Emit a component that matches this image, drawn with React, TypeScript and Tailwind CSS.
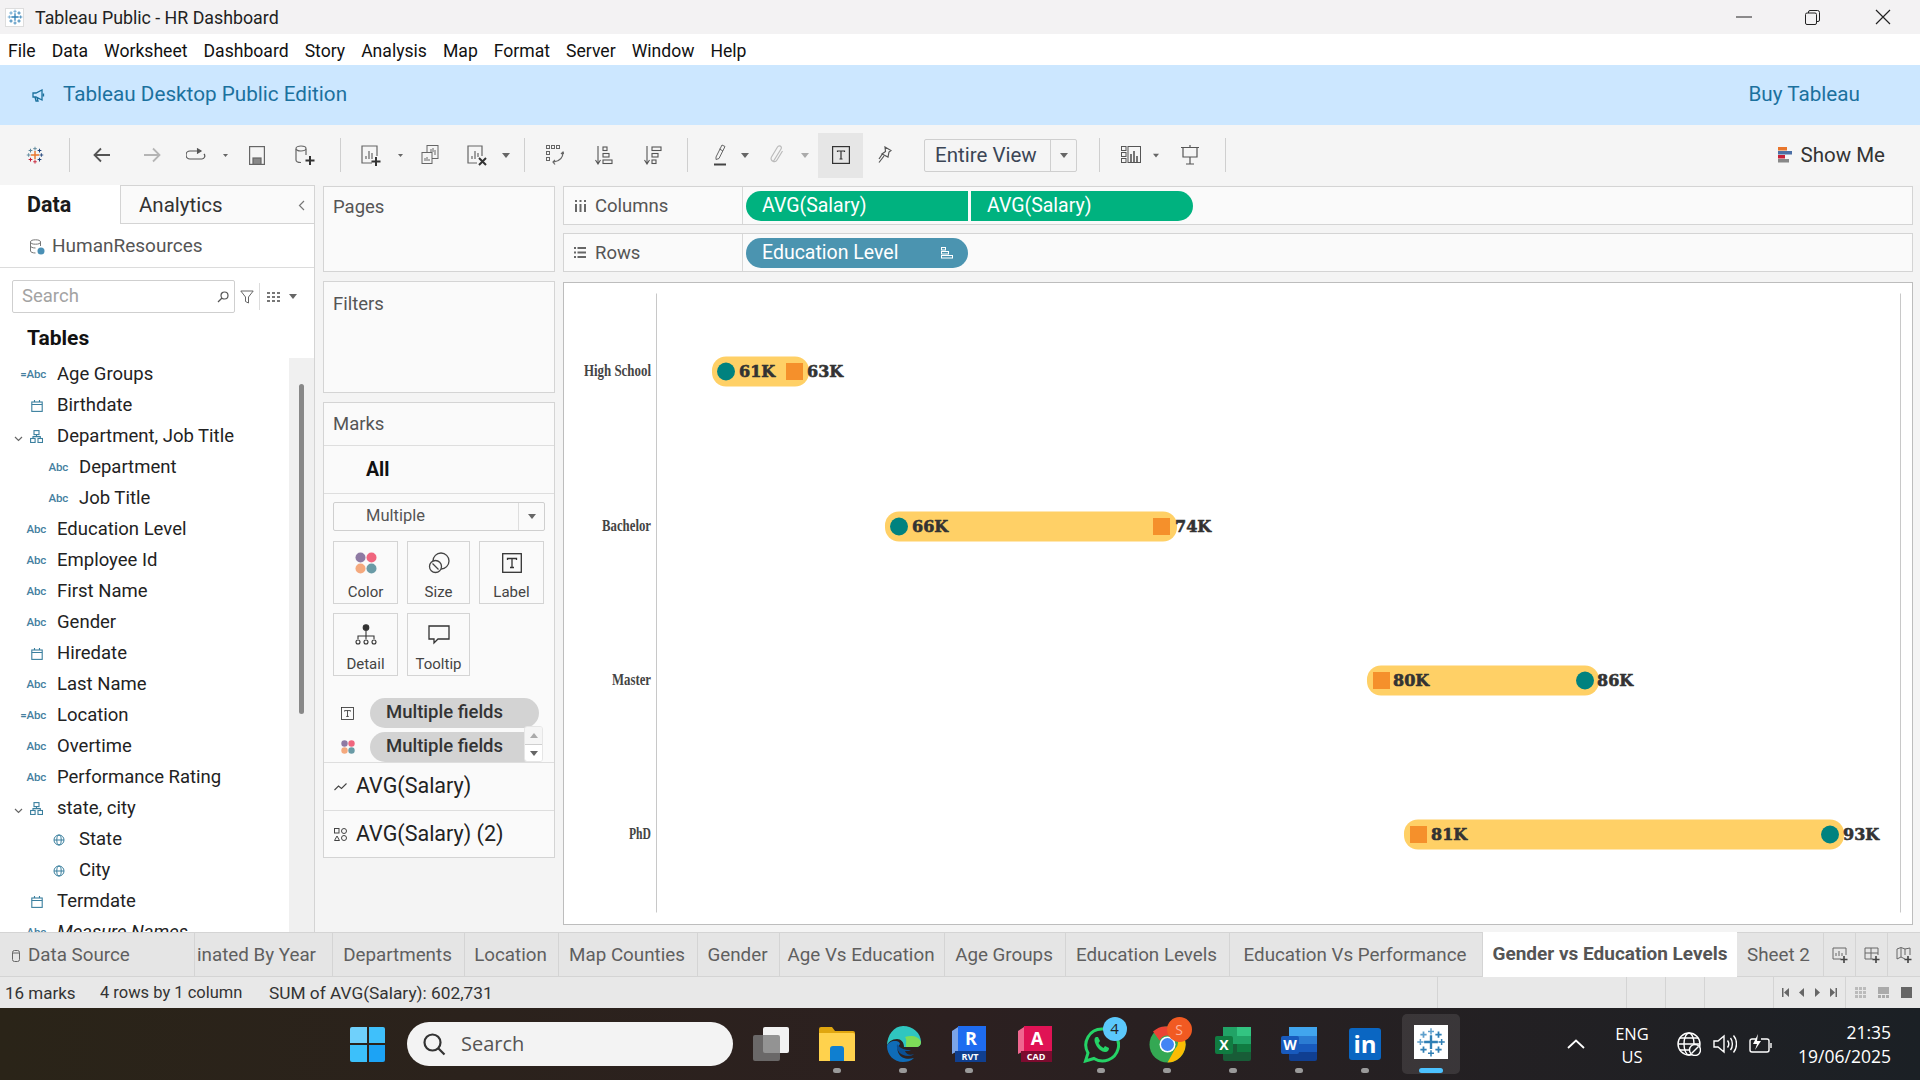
import React from 'react';

const ui = "font-['Roboto',sans-serif]";
const win = "font-['Open_Sans',sans-serif]";

// tableau cross mark, colours are passed in so the same drawing works for the tile and the toolbar
const TableauMark: React.FC<{ size: number; a: string; b: string; c: string; d: string }> = ({ size, a, b, c, d }) => (
    <svg width={size} height={size} viewBox="0 0 24 24" fill="none" strokeLinecap="butt">
        <path d="M12 6.5v11M6.5 12h11" stroke={a} strokeWidth="1.9" />
        <path d="M12 1v5M9.6 3.5h4.8" stroke={b} strokeWidth="1.2" />
        <path d="M12 18.5v5M9.6 21h4.8" stroke={c} strokeWidth="1.2" />
        <path d="M3.5 9.6v4.8M1 12h5" stroke={b} strokeWidth="1.2" />
        <path d="M20.5 9.6v4.8M18 12h5" stroke={d} strokeWidth="1.2" />
        <path d="M6 3.5v5M3.5 6h5" stroke={b} strokeWidth="1.4" />
        <path d="M18 3.5v5M15.5 6h5" stroke={d} strokeWidth="1.4" />
        <path d="M6 15.5v5M3.5 18h5" stroke={c} strokeWidth="1.4" />
        <path d="M18 15.5v5M15.5 18h5" stroke={d} strokeWidth="1.4" />
    </svg>
);

const Caret = () => <svg width="8" height="5" viewBox="0 0 8 5" className="text-[#666]"><path d="M0 0h8L4 5z" fill="currentColor" /></svg>;
const Divider = () => <div className="h-[34px] w-px bg-[#cfcfcf] shrink-0" />;

const Tool: React.FC<{ c: string; children?: React.ReactNode }> = ({ c, children }) => (
    <div className={`flex items-center justify-center shrink-0 ${c}`}>{children}</div>
);

const Toolbar = () => (
    <div className="h-[60px] bg-[#f5f5f5] flex items-center shrink-0">
        <Tool c="w-[69px]"><TableauMark size={18} a="#e8762c" b="#5b879b" c="#c72037" d="#1f447b" /></Tool>
        <Divider />
        <Tool c="w-[64px]">
            <svg width="18" height="16" viewBox="0 0 18 16" fill="none" stroke="#555" strokeWidth="1.8"><path d="M17 8H2M8 1.5 1.5 8 8 14.5" /></svg>
        </Tool>
        <Tool c="w-[35px]">
            <svg width="18" height="16" viewBox="0 0 18 16" fill="none" stroke="#b5b5b5" strokeWidth="1.8"><path d="M1 8h15M10 1.5 16.5 8 10 14.5" /></svg>
        </Tool>
        <Tool c="w-[54px]">
            <svg width="20" height="14" viewBox="0 0 20 14" fill="none" stroke="#555" strokeWidth="1.2"><path d="M12 3H4a3.5 3.5 0 0 0 0 8h12a3 3 0 0 0 2-5" /><path d="m11 .5 4 2.5-4 2.5" fill="#555" /></svg>
        </Tool>
        <Tool c="w-[5px]"><Caret /></Tool>
        <Tool c="w-[58px]">
            <svg width="16" height="19" viewBox="0 0 16 19" fill="none" stroke="#666" strokeWidth="1.2"><rect x=".6" y=".6" width="14.8" height="17.8" /><rect x="4" y="12" width="8" height="6.4" fill="#888" /></svg>
        </Tool>
        <Tool c="w-[38px]">
            <svg width="20" height="21" viewBox="0 0 20 21" fill="none" stroke="#666" strokeWidth="1.2"><path d="M1 4v11c0 1.5 2 2.5 5 2.5M11 10V4" /><ellipse cx="6" cy="3.5" rx="5" ry="2.5" /><path d="M15 11v9M10.5 15.5h9" stroke="#333" strokeWidth="2" /></svg>
        </Tool>
        <div className="w-4 shrink-0" />
        <Divider />
        <Tool c="w-[54px] ml-[3px]">
            <svg width="20" height="21" viewBox="0 0 20 21" fill="none" stroke="#666" strokeWidth="1.2"><path d="M11 18H1V1h15v10" /><path d="M5 14v-3M8 14V6M11 14V8" /><path d="M15 12v9M10.5 16.5h9" stroke="#333" strokeWidth="2" /></svg>
        </Tool>
        <Tool c="w-[5px]"><Caret /></Tool>
        <Tool c="w-[54px]">
            <svg width="18" height="20" viewBox="0 0 18 20" fill="none" stroke="#666" strokeWidth="1"><rect x="6" y=".5" width="11" height="13" /><rect x="1" y="7.5" width="10" height="11" fill="#f5f5f5" /><path d="M4 16v-3M6 16v-4M8 16v-2M10 7V4M12 7V3M14 10V5" /></svg>
        </Tool>
        <Tool c="w-[40px]">
            <svg width="20" height="21" viewBox="0 0 20 21" fill="none" stroke="#666" strokeWidth="1.2"><path d="M10 18H1V1h14v10" /><path d="M5 14v-3M8 14V6M11 12V8" /><path d="m12 13 7 7M19 13l-7 7" stroke="#333" strokeWidth="2" /></svg>
        </Tool>
        <Tool c="w-[18px]"><Caret /></Tool>
        <div className="w-[9px] shrink-0" />
        <Divider />
        <Tool c="w-[60px]">
            <svg width="18" height="20" viewBox="0 0 18 20" fill="none" stroke="#666" strokeWidth="1"><rect x=".5" y=".5" width="3" height="3" /><rect x="5.5" y=".5" width="3" height="3" /><rect x="10.5" y=".5" width="3" height="3" /><rect x=".5" y="6.5" width="3" height="3" /><rect x=".5" y="12.5" width="3" height="3" /><path d="M17 7c0 5-3 9-9 10M9 15l-2 2 2 2.5M15 9l2-2 1 2" strokeWidth="1.2" /></svg>
        </Tool>
        <Tool c="w-[38px]">
            <svg width="18" height="19" viewBox="0 0 18 19" fill="none" stroke="#555" strokeWidth="1.1"><path d="M3 0v17M.5 14 3 18l2.5-4" /><rect x="8" y="1" width="4" height="3.5" /><rect x="8" y="7.5" width="6" height="3.5" /><rect x="8" y="14" width="9" height="3.5" /></svg>
        </Tool>
        <Tool c="w-[60px]">
            <svg width="18" height="19" viewBox="0 0 18 19" fill="none" stroke="#555" strokeWidth="1.1"><path d="M3 0v17M.5 14 3 18l2.5-4" /><rect x="8" y="1" width="9" height="3.5" /><rect x="8" y="7.5" width="6" height="3.5" /><rect x="8" y="14" width="4" height="3.5" /></svg>
        </Tool>
        <div className="w-1 shrink-0" />
        <Divider />
        <Tool c="w-[34px] ml-[15px]">
            <svg width="14" height="22" viewBox="0 0 14 22" fill="none" stroke="#666" strokeWidth="1"><path d="m3 13 6-12 3 1.5-6 12-3 1zM6.500 5 10 7" /><path d="M1 20.5h12" stroke="#444" strokeWidth="2" /></svg>
        </Tool>
        <Tool c="w-[16px]"><Caret /></Tool>
        <Tool c="w-[48px]">
            <svg width="14" height="20" viewBox="0 0 14 20" fill="none" stroke="#bbb" strokeWidth="1.2"><path d="M3 17 11 4c1.500-2.500-2-4.500-3.500-2L1.500 12c-2 3.500 3.500 6.500 5.500 3l5.500-9" /></svg>
        </Tool>
        <Tool c="w-[8px]"><svg width="8" height="5" viewBox="0 0 8 5"><path d="M0 0h8L4 5z" fill="#aaa" /></svg></Tool>
        <div className="w-[9px] shrink-0" />
        <div className="w-[45px] h-[45px] bg-[#e6e6e6] flex items-center justify-center shrink-0">
            <svg width="18" height="18" viewBox="0 0 18 18" fill="none" stroke="#333" strokeWidth="1.2"><rect x=".6" y=".6" width="16.8" height="16.8" /><path d="M5.500 6V5h7v1M9 5v8M7.500 13h3" /></svg>
        </div>
        <Tool c="w-[44px]">
            <svg width="14" height="18" viewBox="0 0 14 18" fill="none" stroke="#555" strokeWidth="1.2"><path d="m7 1 6 3.500-2 1.500-1 5-6-3 3.500-2.500zM4 8.500 1 13M6 10l-5 6.500" /></svg>
        </Tool>
        <div className="w-[17px] shrink-0" />
        <div className="w-[153px] h-[33px] border border-[#cfcfcf] rounded-[2px] flex items-center shrink-0">
            <span className={`flex-1 pl-[10px] text-[20.5px] text-[#3c4656] ${ui}`}>Entire View</span>
            <div className="w-[26px] h-full border-l border-[#cfcfcf] flex items-center justify-center"><Caret /></div>
        </div>
        <div className="w-[22px] shrink-0" />
        <Divider />
        <Tool c="w-[44px] ml-[9px]">
            <svg width="20" height="18" viewBox="0 0 20 18" fill="none" stroke="#555" strokeWidth="1"><rect x=".5" y=".5" width="4.500" height="4" /><rect x=".5" y="6.500" width="4.500" height="4" /><rect x=".5" y="12.500" width="4.500" height="4" /><rect x="7" y=".5" width="12.500" height="16" /><path d="M10 16V8M13 16V5M16 16v-6" strokeWidth="1.6" /></svg>
        </Tool>
        <Tool c="w-[6px]"><Caret /></Tool>
        <Tool c="w-[62px]">
            <svg width="18" height="20" viewBox="0 0 18 20" fill="none" stroke="#555" strokeWidth="1.2"><path d="M0 2.500h18M2 3v9h14V3M9 0v2M9 12v7M5 19h8" /></svg>
        </Tool>
        <div className="w-1 shrink-0" />
        <Divider />
        <div className="ml-auto pr-[35px] flex items-center gap-[9px]">
            <svg width="14" height="16" viewBox="0 0 14 16"><rect width="9" height="3.5" fill="#e8762c" /><rect y="4" width="14" height="3.5" fill="#4b6fa5" /><rect y="8" width="7" height="3.5" fill="#c72037" /><rect y="12" width="11" height="3.5" fill="#888" /></svg>
            <span className={`text-[20.5px] text-[#333] ${ui}`}>Show Me</span>
        </div>
    </div>
);

const Abc: React.FC<{ eq?: boolean }> = ({ eq }) => (
    <span className="text-[11.5px] font-medium text-[#44809f] tracking-[-0.2px]">{eq ? '=' : ''}Abc</span>
);
const Cal = () => (
    <svg width="12" height="12" viewBox="0 0 12 12" fill="none" stroke="#3a7f9e" strokeWidth="1.1"><rect x=".8" y="2" width="10.4" height="9.4" /><path d="M.8 4.500h10.400M3.500 0v2M8.500 0v2" /></svg>
);
const Hier = () => (
    <svg width="13" height="13" viewBox="0 0 13 13" fill="none" stroke="#3a7f9e" strokeWidth="1.1"><rect x="4" y=".6" width="5" height="4" /><rect x=".6" y="8.5" width="4.5" height="4" /><rect x="8" y="8.5" width="4.5" height="4" /><path d="M6.500 4.600v2H3v2M6.500 6.600H10.300v2" /></svg>
);
const Globe = () => (
    <svg width="12" height="12" viewBox="0 0 12 12" fill="none" stroke="#3a7f9e" strokeWidth="1"><circle cx="6" cy="6" r="5" /><ellipse cx="6" cy="6" rx="2.2" ry="5" /><path d="M1 6h10" /></svg>
);

type Field = { name: string; kind: 'abc' | 'eq' | 'cal' | 'hier' | 'geo'; child?: boolean; open?: boolean; italic?: boolean };
const fields: Field[] = [
    { name: 'Age Groups', kind: 'eq' },
    { name: 'Birthdate', kind: 'cal' },
    { name: 'Department, Job Title', kind: 'hier', open: true },
    { name: 'Department', kind: 'abc', child: true },
    { name: 'Job Title', kind: 'abc', child: true },
    { name: 'Education Level', kind: 'abc' },
    { name: 'Employee Id', kind: 'abc' },
    { name: 'First Name', kind: 'abc' },
    { name: 'Gender', kind: 'abc' },
    { name: 'Hiredate', kind: 'cal' },
    { name: 'Last Name', kind: 'abc' },
    { name: 'Location', kind: 'eq' },
    { name: 'Overtime', kind: 'abc' },
    { name: 'Performance Rating', kind: 'abc' },
    { name: 'state, city', kind: 'hier', open: true },
    { name: 'State', kind: 'geo', child: true },
    { name: 'City', kind: 'geo', child: true },
    { name: 'Termdate', kind: 'cal' },
    { name: 'Measure Names', kind: 'abc', italic: true },
];

const FieldRow: React.FC<{ f: Field }> = ({ f }) => (
    <div className="h-[31px] flex items-center shrink-0">
        <div className={`relative flex items-center justify-end shrink-0 ${f.child ? 'w-[68px]' : 'w-[46px]'}`}>
            {f.open && (
                <svg width="9" height="6" viewBox="0 0 9 6" fill="none" stroke="#666" strokeWidth="1.2" className="absolute left-[14px] top-[6px]"><path d="m1 1 3.500 3.500L8 1" /></svg>
            )}
            {f.kind === 'abc' && <Abc />}
            {f.kind === 'eq' && <Abc eq />}
            {f.kind === 'cal' && <div className="pr-[3px] flex"><Cal /></div>}
            {f.kind === 'hier' && <div className="pr-[3px] flex"><Hier /></div>}
            {f.kind === 'geo' && <div className="pr-[3px] flex"><Globe /></div>}
        </div>
        <span className={`ml-[11px] text-[18.5px] text-[#222] whitespace-nowrap ${f.italic ? 'italic' : ''}`}>{f.name}</span>
    </div>
);

const DataPanel = () => (
    <div className="w-[315px] bg-white border-r border-[#d4d4d4] flex flex-col shrink-0 overflow-hidden">
        <div className="h-[39px] flex shrink-0">
            <div className="w-[120px] pl-[27px] pt-px flex items-center text-[21.5px] font-bold text-[#1a1a1a]">Data</div>
            <div className="flex-1 bg-[#fafafa] border-l border-b border-t border-[#d4d4d4] pl-[18px] pt-px flex items-center justify-between pr-[9px] text-[20.5px] text-[#333]">
                <span>Analytics</span>
                <svg width="7" height="11" viewBox="0 0 7 11" fill="none" stroke="#777" strokeWidth="1.2"><path d="M6 1 1.500 5.500 6 10" /></svg>
            </div>
        </div>
        <div className="h-[44px] border-b border-[#dcdcdc] pt-[2px] flex items-center pl-[29px] gap-[7px] shrink-0">
            <svg width="16" height="16" viewBox="0 0 16 16" fill="none" stroke="#777" strokeWidth="1"><ellipse cx="6.500" cy="3" rx="5" ry="2.200" /><path d="M1.500 3v9c0 1 2 2 5 2M11.500 3v4M1.500 7c0 1 2 2 5 2" /><circle cx="12" cy="12" r="3.500" fill="#4a90b5" stroke="none" /></svg>
            <span className="text-[19px] text-[#555]">HumanResources</span>
        </div>
        <div className="h-[33px] mt-[12px] flex items-center pl-[12px] shrink-0">
            <div className="w-[223px] h-[33px] border border-[#cfcfcf] rounded-[2px] flex items-center justify-between pl-[9px] pr-[5px] text-[18.5px] text-[#a3a3a3]">
                <span>Search</span>
                <svg width="12" height="12" viewBox="0 0 12 12" fill="none" stroke="#555" strokeWidth="1.2"><circle cx="7.500" cy="4.500" r="3.500" /><path d="M5 7 1 11" /></svg>
            </div>
            <div className="w-[24px] flex justify-center">
                <svg width="14" height="14" viewBox="0 0 14 14" fill="none" stroke="#666" strokeWidth="1"><path d="M.8 1h12.400L8.500 7v6L5.500 11.500V7z" /></svg>
            </div>
            <div className="w-px h-[27px] bg-[#dcdcdc]" />
            <div className="flex items-center pl-[7px] gap-[9px]">
                <svg width="13" height="10" viewBox="0 0 13 10" fill="#777"><path d="M0 0h3v2H0zM5 0h3v2H5zM10 0h3v2h-3zM0 4h3v2H0zM5 4h3v2H5zM10 4h3v2h-3zM0 8h3v2H0zM5 8h3v2H5zM10 8h3v2h-3z" /></svg>
                <Caret />
            </div>
        </div>
        <div className="h-[45px] pl-[27px] pt-[10px] text-[21px] font-bold text-[#111] shrink-0">Tables</div>
        <div className="flex-1 flex min-h-0">
            <div className="flex-1 flex flex-col overflow-hidden pt-px">
                {fields.map((f) => <FieldRow key={f.name} f={f} />)}
            </div>
            <div className="w-[25px] bg-[#f0f0f0] shrink-0">
                <div className="mt-[26px] ml-[10px] w-[5px] h-[330px] rounded-[3px] bg-[#888]" />
            </div>
        </div>
    </div>
);

const MarkBtn: React.FC<{ label: string; c?: string; children: React.ReactNode }> = ({ label, c = 'w-[63px]', children }) => (
    <div className={`h-[63px] border border-[#d4d4d4] flex flex-col items-center pt-[9px] ${c}`}>
        <div className="h-[24px] flex items-center">{children}</div>
        <span className="mt-[8px] text-[15px] leading-[18px] text-[#444]">{label}</span>
    </div>
);

const Dots: React.FC<{ s: number }> = ({ s }) => (
    <svg width={s} height={s} viewBox="0 0 22 22"><circle cx="5.500" cy="5.500" r="5" fill="#8e7aa3" /><circle cx="16.500" cy="5.500" r="5" fill="#f0667e" /><circle cx="5.500" cy="16.500" r="5" fill="#f4a97e" /><circle cx="16.500" cy="16.500" r="5" fill="#6a9ba6" /></svg>
);

const TBox: React.FC<{ s: number }> = ({ s }) => (
    <svg width={s} height={s} viewBox="0 0 20 20" fill="none" stroke="#333" strokeWidth="1.3"><rect x=".7" y=".7" width="18.6" height="18.6" /><path d="M5.500 7V5.500h9V7M10 5.500v9M8 14.500h4" /></svg>
);

const MarksCard = () => (
    <div className="h-[456px] mt-[9px] border border-[#d4d4d4] bg-[#fafafa] flex flex-col shrink-0">
        <div className="h-[43px] border-b border-[#dedede] pl-[9px] pt-[2px] flex items-center text-[18.5px] text-[#555] shrink-0">Marks</div>
        <div className="h-[48px] border-b border-[#dedede] pl-[42px] flex items-center text-[19.5px] font-bold text-[#111] shrink-0">All</div>
        <div className="mx-[9px] mt-[8px] h-[29px] border border-[#cfcfcf] rounded-[2px] flex items-center shrink-0">
            <span className="flex-1 pl-[32px] text-[16.5px] text-[#555]">Multiple</span>
            <div className="w-[26px] h-full border-l border-[#dedede] flex items-center justify-center"><Caret /></div>
        </div>
        <div className="mx-[9px] mt-[10px] grid grid-cols-[65px_63px_65px] gap-x-[9px] gap-y-[9px] shrink-0">
            <MarkBtn label="Color" c="w-[65px]"><Dots s={22} /></MarkBtn>
            <MarkBtn label="Size">
                <svg width="24" height="24" viewBox="0 0 24 24" fill="none" stroke="#444" strokeWidth="1.3"><circle cx="14" cy="10" r="8" /><circle cx="8.500" cy="15.500" r="6" fill="#fafafa" /><path d="m5.500 12.500 6 6" /></svg>
            </MarkBtn>
            <MarkBtn label="Label" c="w-[65px]"><TBox s={20} /></MarkBtn>
            <MarkBtn label="Detail" c="w-[65px]">
                <svg width="22" height="22" viewBox="0 0 22 22" fill="none" stroke="#333" strokeWidth="1.1"><circle cx="11" cy="3.500" r="2.800" fill="#333" /><path d="M11 6v9M3 15v-3h16v3" /><circle cx="3" cy="18" r="2" /><circle cx="11" cy="18" r="2" /><circle cx="19" cy="18" r="2" /></svg>
            </MarkBtn>
            <MarkBtn label="Tooltip">
                <svg width="22" height="20" viewBox="0 0 22 20" fill="none" stroke="#333" strokeWidth="1.3"><path d="M1 1h20v13H10l-4 4v-4H1z" /></svg>
            </MarkBtn>
        </div>
        <div className="mt-[22px] flex items-center pl-[17px] shrink-0">
            <div className="w-[29px]"><TBox s={13} /></div>
            <div className="w-[169px] h-[30px] rounded-full bg-[#d3d3d3] pl-[16px] flex items-center text-[18.5px] font-medium text-[#333]">Multiple fields</div>
        </div>
        <div className="mt-[4px] flex items-center pl-[17px] relative shrink-0">
            <div className="w-[29px]"><Dots s={14} /></div>
            <div className="w-[169px] h-[30px] rounded-full bg-[#d3d3d3] pl-[16px] flex items-center text-[18.5px] font-medium text-[#333]">Multiple fields</div>
            <div className="absolute left-[200px] top-[-6px] w-[19px] h-[36px] flex flex-col rounded-[3px] overflow-hidden border border-[#e6e6e6]">
                <div className="h-[17px] bg-[#f5f5f5] flex items-center justify-center"><svg width="8" height="5" viewBox="0 0 8 5"><path d="M0 5h8L4 0z" fill="#aaa" /></svg></div>
                <div className="flex-1 bg-white border-t border-[#cfcfcf] flex items-center justify-center"><Caret /></div>
            </div>
        </div>
        <div className="h-[48px] border-t border-[#dedede] flex items-center shrink-0">
            <div className="w-[32px] flex justify-center">
                <svg width="13" height="8" viewBox="0 0 13 8" fill="none" stroke="#444" strokeWidth="1.1"><path d="m.5 7 4-4 3 2.500L12.500.5" /></svg>
            </div>
            <span className="text-[21.5px] text-[#222]">AVG(Salary)</span>
        </div>
        <div className="h-[47px] border-t border-[#dedede] flex items-center shrink-0">
            <div className="w-[32px] flex justify-center">
                <svg width="13" height="13" viewBox="0 0 13 13" fill="none" stroke="#444" strokeWidth="1"><rect x=".5" y=".5" width="4.500" height="4.500" /><circle cx="10" cy="3" r="2.500" /><path d="m3 8 2.500 4.500h-5z" /><circle cx="10" cy="10" r="2.500" /></svg>
            </div>
            <span className="text-[21.5px] text-[#222]">AVG(Salary) (2)</span>
        </div>
    </div>
);

const Card: React.FC<{ title: string; c: string }> = ({ title, c }) => (
    <div className={`border border-[#d4d4d4] bg-[#fafafa] pl-[9px] text-[18.5px] text-[#555] shrink-0 ${c}`}>{title}</div>
);

const Pill: React.FC<{ c: string; children: React.ReactNode }> = ({ c, children }) => (
    <div className={`h-[30px] flex items-center pl-[16px] text-[19.5px] text-white ${c}`}>{children}</div>
);

const Shelf: React.FC<{ label: string; icon: React.ReactNode; children: React.ReactNode; c?: string }> = ({ label, icon, children, c = '' }) => (
    <div className={`h-[39px] border border-[#d4d4d4] bg-[#fafafa] flex items-center shrink-0 ${c}`}>
        <div className="w-[179px] h-full border-r border-[#d8d8d8] flex items-center pl-[9px] gap-[8px] text-[18.5px] text-[#555] shrink-0">
            <div className="w-[14px] flex justify-center">{icon}</div>
            <span className="pt-[3px]">{label}</span>
        </div>
        <div className="pl-[3px] flex gap-[3px]">{children}</div>
    </div>
);

type Row = { label: string; squeeze: number; y: number; from: number; to: number; circle: number; square: number; a: [string, number]; b: [string, number] };
const rows: Row[] = [
    { label: 'High School', squeeze: 67, y: 371, from: 712, to: 809, circle: 726, square: 786, a: ['61K', 739], b: ['63K', 807] },
    { label: 'Bachelor', squeeze: 49, y: 526, from: 885, to: 1177, circle: 899, square: 1153, a: ['66K', 912], b: ['74K', 1175] },
    { label: 'Master', squeeze: 39, y: 680, from: 1367, to: 1599, circle: 1585, square: 1373, a: ['80K', 1393], b: ['86K', 1597] },
    { label: 'PhD', squeeze: 22, y: 834, from: 1404, to: 1844, circle: 1830, square: 1410, a: ['81K', 1431], b: ['93K', 1843] },
];

// viewBox uses the page coordinates of the chart so the marks can be read off directly
const Chart = () => (
    <div className="flex-1 mt-[10px] mb-[7px] border border-[#bdbdbd] bg-white min-h-0">
        <svg viewBox="564 283 1348 640" className="w-full h-full block">
            <path d="M656.500 293v619M1900.500 293v619" stroke="#c8c8c8" strokeWidth="1" />
            {rows.map((r) => (
                <g key={r.label}>
                    <text x={651 - r.squeeze} y={r.y + 4} textLength={r.squeeze} lengthAdjust="spacingAndGlyphs" className="font-['Liberation_Serif',serif] font-bold text-[17px] fill-[#444]">{r.label}</text>
                    <rect x={r.from} y={r.y - 15} width={r.to - r.from} height="30" rx="14" fill="#ffd066" />
                    <ellipse cx={r.circle} cy={r.y} rx="9" ry="9" fill="#00827f" />
                    <rect x={r.square} y={r.y - 8.5} width="17" height="17" fill="#f5902b" />
                    <text x={r.a[1]} y={r.y + 5} className="font-['DejaVu_Serif',serif] font-bold text-[16px] fill-[#333] stroke-[#333] stroke-[0.6px]">{r.a[0]}</text>
                    <text x={r.b[1]} y={r.y + 5} className="font-['DejaVu_Serif',serif] font-bold text-[16px] fill-[#333] stroke-[#333] stroke-[0.6px]">{r.b[0]}</text>
                </g>
            ))}
        </svg>
    </div>
);

const tabs = [
    { t: 'inated By Year', w: 'w-[138px]' },
    { t: 'Departments', w: 'w-[132px]' },
    { t: 'Location', w: 'w-[94px]' },
    { t: 'Map Counties', w: 'w-[139px]' },
    { t: 'Gender', w: 'w-[82px]' },
    { t: 'Age Vs Education', w: 'w-[165px]' },
    { t: 'Age Groups', w: 'w-[121px]' },
    { t: 'Education Levels', w: 'w-[164px]' },
    { t: 'Education Vs Performance', w: 'w-[253px]' },
];

const SheetAdd: React.FC<{ children: React.ReactNode; w: string }> = ({ children, w }) => (
    <div className={`h-full border-l border-[#d4d4d4] flex items-center justify-center ${w}`}>
        <svg width="16" height="16" viewBox="0 0 16 16" fill="none" stroke="#666" strokeWidth="1">
            {children}
            <path d="M12 9v7M8.500 12.500h7" stroke="#444" strokeWidth="1.6" />
        </svg>
    </div>
);

const TabBar = () => (
    <div className="h-[45px] bg-[#e5e5e5] border-t border-[#d4d4d4] border-b flex text-[18.8px] text-[#5f5f5f] shrink-0">
        <div className="w-[195px] border-r border-[#d4d4d4] flex items-center pl-[12px] gap-[8px] overflow-hidden pt-[2px]">
            <svg width="8" height="12" viewBox="0 0 8 12" fill="none" stroke="#666"><rect x=".5" y=".5" width="7" height="11" rx="2" /><path d="M.5 3h7" /></svg>
            <span>Data Source</span>
        </div>
        {tabs.map((t, i) => (
            <div key={t.t} className={`${t.w} border-r border-[#d4d4d4] flex items-center pt-[2px] whitespace-nowrap ${i === 0 ? 'pl-[2px]' : 'justify-center pr-[2px]'}`}>{t.t}</div>
        ))}
        <div className="w-[254px] -mt-px h-[45px] bg-white flex items-center justify-center font-bold text-[19px] text-[#555] whitespace-nowrap">Gender vs Education Levels</div>
        <div className="w-[86px] flex items-center justify-center pt-[2px] pr-[3px]">Sheet 2</div>
        <SheetAdd w="w-[32px]"><path d="M9 12H1V1h13v7M4 9V6M7 9V4M10 9V6" /></SheetAdd>
        <SheetAdd w="w-[32px]"><path d="M9 12H1V1h13v7M1 6h13M7 1v11" /></SheetAdd>
        <SheetAdd w="w-[33px]"><path d="M9 12 5 10l-4 2V2l4-1.500 4 1.500 5-1v7M5 1v9M9 2v6" /></SheetAdd>
    </div>
);

const StatusBar = () => (
    <div className="h-[31px] bg-[#e8e8e8] flex items-center text-[#333] shrink-0">
        <span className="w-[100px] pl-[5px] pt-[2px] text-[17px]">16 marks</span>
        <span className="w-[169px] pt-[2px] text-[16.5px]">4 rows by 1 column</span>
        <span className="w-[1168px] pt-[2px] text-[17.3px]">SUM of AVG(Salary): 602,731</span>
        <div className="w-[189px] h-full border-l border-[#d4d4d4]" />
        <div className="w-[39px] h-full border-l border-[#d4d4d4]" />
        <div className="w-[39px] h-full border-l border-[#d4d4d4]" />
        <div className="w-[69px] h-full border-l border-[#d4d4d4]" />
        <div className="w-[72px] h-full border-l border-[#d4d4d4] flex items-center justify-center gap-[9px]">
            <svg width="7" height="9" viewBox="0 0 7 9" fill="#666"><path d="M0 0h1.500v9H0zM7 0v9L2 4.500z" /></svg>
            <svg width="7" height="9" viewBox="0 0 7 9" fill="#666"><path d="M6 0v9L1 4.500z" /></svg>
            <svg width="7" height="9" viewBox="0 0 7 9" fill="#666"><path d="M1 0v9l5-4.500z" /></svg>
            <svg width="7" height="9" viewBox="0 0 7 9" fill="#666"><path d="M0 0v9l5-4.500zM5.500 0H7v9H5.500z" /></svg>
        </div>
        <div className="flex-1 h-full border-l border-[#d4d4d4] flex items-center justify-center gap-[12px]">
            <svg width="11" height="11" viewBox="0 0 11 11" fill="#bbb"><path d="M0 0h3v3H0zM4 0h3v3H4zM8 0h3v3H8zM0 4h3v3H0zM4 4h3v3H4zM8 4h3v3H8zM0 8h3v3H0zM4 8h3v3H4zM8 8h3v3H8z" /></svg>
            <svg width="11" height="11" viewBox="0 0 11 11" fill="#aaa"><path d="M0 0h11v7H0zM0 8h3v3H0zM4 8h3v3H4zM8 8h3v3H8z" /></svg>
            <div className="w-[11px] h-[11px] bg-[#666]" />
        </div>
    </div>
);

const Slot: React.FC<{ dot?: boolean; children: React.ReactNode }> = ({ dot = true, children }) => (
    <div className="relative w-[66px] h-full flex items-center justify-center shrink-0">
        {children}
        {dot && <div className="absolute left-[29px] top-[60px] w-[8px] h-[5px] rounded-full bg-[#9a9a9a]" />}
    </div>
);

const Taskbar = () => (
    <div className={`h-[72px] bg-linear-to-r from-[#2a2418] via-[#2c2020] to-[#1b2025] flex items-center text-white shrink-0 ${win}`}>
        <div className="ml-[350px] w-[35px] h-[35px] grid grid-cols-2 gap-[2px] shrink-0">
            <div className="rounded-tl-[2px] bg-[#6fd0fb]" />
            <div className="rounded-tr-[2px] bg-[#3fc0fb]" />
            <div className="rounded-bl-[2px] bg-[#3cc0fa]" />
            <div className="rounded-br-[2px] bg-[#1ca3f5]" />
        </div>
        <div className="ml-[22px] w-[326px] h-[44px] rounded-full bg-[#f3f3f3] flex items-center pl-[15px] gap-[15px] text-[20px] text-[#555] shrink-0">
            <svg width="24" height="24" viewBox="0 0 24 24" fill="none" stroke="#333" strokeWidth="2.2"><circle cx="10.500" cy="10.500" r="8" /><path d="m16.500 16.500 6 6" /></svg>
            <span>Search</span>
        </div>
        <div className="w-[5px] shrink-0" />
        <Slot dot={false}>
            <div className="w-[36px] h-[34px] relative">
                <div className="absolute right-0 top-0 w-[26px] h-[26px] rounded-[2px] bg-[#f2f2f2]" />
                <div className="absolute left-0 bottom-0 w-[27px] h-[26px] rounded-[2px] bg-[#7a7a7a]/80" />
            </div>
        </Slot>
        <Slot>
            <svg width="36" height="34" viewBox="0 0 36 34"><path d="M0 2a2 2 0 0 1 2-2h11l3 4h18a2 2 0 0 1 2 2v28H0z" fill="#e0a60f" /><path d="M0 6h34a2 2 0 0 1 2 2v26H0z" fill="#ffd24d" /><path d="M11 22a3 3 0 0 1 3-3h8a3 3 0 0 1 3 3v12H11z" fill="#0f7fd0" /></svg>
        </Slot>
        <Slot>
            <svg width="36" height="36" viewBox="0 0 36 36"><path d="M18 0c10 0 18 7 18 16 0 3-2 5-5 5H19c0-5-3-8-7-8-5 0-9 3-10 7C2 9 9 0 18 0z" fill="#2fc6c0" /><path d="M36 16c0 3-2 5-5 5H21c0-5 1-7-1-10 6-2 14-1 16 5z" fill="#7ddc58" /><path d="M2 20c0 9 7 16 16 16 4 0 8-1 11-4-7 2-13 0-15-4-2-3-2-7 1-10-1-3-3-3-5-3-4 0-7 2-8 5z" fill="#0f6cb8" /><path d="M12 18c-1 7 4 12 11 12 3 0 5-1 6-2-4 2-8 0-9-3 2 0 5 0 6-1-4 0-10 0-14-6z" fill="#0a4f95" /></svg>
        </Slot>
        <Slot>
            <svg width="34" height="36" viewBox="0 0 34 36"><path d="M0 5 6 1v24l-6 3z" fill="#7ba4e8" /><path d="M6 0h28v25H6z" fill="#1e6cf0" /><path d="M3 25h31v11H3z" fill="#103f8f" /><text x="19" y="19" textAnchor="middle" className="font-bold text-[18px] fill-white">R</text><text x="18" y="34" textAnchor="middle" className="font-bold text-[9px] fill-white">RVT</text></svg>
        </Slot>
        <Slot dot={false}>
            <svg width="34" height="36" viewBox="0 0 34 36"><path d="M0 5 6 1v24l-6 3z" fill="#f0668f" /><path d="M6 0h28v25H6z" fill="#e01355" /><path d="M3 25h31v11H3z" fill="#7d0b2f" /><text x="19" y="19" textAnchor="middle" className="font-bold text-[18px] fill-white">A</text><text x="18" y="34" textAnchor="middle" className="font-bold text-[9px] fill-white">CAD</text></svg>
        </Slot>
        <Slot>
            <div className="relative w-[37px] h-[37px]">
                <svg width="37" height="37" viewBox="0 0 37 37" fill="none"><path d="M19 3a16 16 0 0 0-14 24L2.500 35l8.500-2.500A16 16 0 1 0 19 3z" stroke="#25d366" strokeWidth="3" /><path d="M13 11c-2 1-2 4 0 8s6 7 9 7c3 0 4-2 4-4l-4-2-1.500 2c-2-1-4-3-5-5l1.500-2-2-4z" fill="#25d366" /></svg>
                <div className="absolute left-[20px] top-[-9px] w-[24px] h-[24px] rounded-full bg-[#5bc8fb] text-[#222] text-[15px] flex items-center justify-center">4</div>
            </div>
        </Slot>
        <Slot>
            <div className="relative w-[37px] h-[37px]">
                <svg width="37" height="37" viewBox="0 0 37 37"><circle cx="18.500" cy="18.500" r="18" fill="#34a853" /><path d="M18.500.5a18 18 0 0 1 15.600 9H18.500a9 9 0 0 0-8 5L4 5.500A18 18 0 0 1 18.500.5z" fill="#ea4335" /><path d="M34.100 9.500a18 18 0 0 1-15.600 27L26 23a9 9 0 0 0 0-13.500z" fill="#fbbc04" /><circle cx="18.500" cy="18.500" r="8" fill="#fff" /><circle cx="18.500" cy="18.500" r="6.500" fill="#4285f4" /></svg>
                <div className="absolute left-[18px] top-[-9px] w-[25px] h-[25px] rounded-full bg-[#f15a22] text-[#ffb199] text-[14px] flex items-center justify-center">S</div>
            </div>
        </Slot>
        <Slot>
            <svg width="36" height="34" viewBox="0 0 36 34"><rect x="8" y="0" width="28" height="34" rx="2" fill="#185c37" /><rect x="22" y="0" width="14" height="9" fill="#33c481" /><rect x="8" y="0" width="14" height="9" fill="#21a366" /><rect x="8" y="9" width="14" height="8" fill="#21a366" /><rect x="22" y="9" width="14" height="8" fill="#21a366" /><rect x="22" y="17" width="14" height="8" fill="#107c41" /><rect x="0" y="9" width="18" height="18" rx="2" fill="#107c41" /><text x="9" y="23" textAnchor="middle" className="font-bold text-[14px] fill-white">X</text></svg>
        </Slot>
        <Slot>
            <svg width="36" height="34" viewBox="0 0 36 34"><rect x="8" y="0" width="28" height="34" rx="2" fill="#103f91" /><rect x="8" y="0" width="28" height="9" fill="#41a5ee" /><rect x="8" y="9" width="28" height="8" fill="#2b7cd3" /><rect x="8" y="17" width="28" height="8" fill="#185abd" /><rect x="0" y="9" width="18" height="18" rx="2" fill="#185abd" /><text x="9" y="23" textAnchor="middle" className="font-bold text-[14px] fill-white">W</text></svg>
        </Slot>
        <Slot>
            <div className="w-[32px] h-[32px] rounded-[3px] bg-[#0a66c2] flex items-center justify-center text-white font-bold text-[24px] leading-none">in</div>
        </Slot>
        <div className="w-[58px] h-[60px] ml-[4px] rounded-[5px] bg-white/10 relative flex items-center justify-center shrink-0">
            <div className="w-[34px] h-[34px] bg-white flex items-center justify-center -mt-[4px]">
                <TableauMark size={30} a="#2f7fb5" b="#5fa0cc" c="#2f7fb5" d="#2f7fb5" />
            </div>
            <div className="absolute left-[17px] top-[54px] w-[24px] h-[5px] rounded-full bg-[#4cc2ff]" />
        </div>
        <div className="ml-auto flex items-center pr-[29px]">
            <svg width="18" height="10" viewBox="0 0 18 10" fill="none" stroke="#fff" strokeWidth="1.8" className="mr-[15px]"><path d="m1 9 8-7.500L17 9" /></svg>
            <div className="w-[64px] text-center text-[16.5px] leading-[23px] pt-px">ENG<br />US</div>
            <div className="w-[7px]" />
            <div className="w-[36px] flex justify-center">
                <svg width="24" height="24" viewBox="0 0 24 24" fill="none" stroke="#fff" strokeWidth="1.4"><circle cx="12" cy="12" r="11" /><ellipse cx="12" cy="12" rx="5" ry="11" /><path d="M1 12h22M3 6h18M3 18h10" /><circle cx="18" cy="18" r="5.500" fill="#1f2226" /><path d="m14.500 21.500 7-7" /></svg>
            </div>
            <div className="w-[36px] flex justify-center">
                <svg width="24" height="20" viewBox="0 0 24 20" fill="none" stroke="#fff" strokeWidth="1.4"><path d="M1 7h4l6-5v16l-6-5H1zM14.500 6.500c1.500 2 1.500 5 0 7M17.500 4c2.500 3 2.500 9 0 12M20.500 1.500c4 4.500 4 12.500 0 17" /></svg>
            </div>
            <div className="w-[36px] flex justify-center">
                <svg width="24" height="20" viewBox="0 0 24 20" fill="none" stroke="#fff" strokeWidth="1.4"><path d="M7 5H3a2 2 0 0 0-2 2v9a2 2 0 0 0 2 2h15a2 2 0 0 0 2-2V7a2 2 0 0 0-2-2h-6M22 9v5" /><path d="M9 0 4 10h4l-2 6 6-9H8z" fill="#fff" stroke="none" /></svg>
            </div>
            <div className="w-[17px]" />
            <div className="text-right text-[17.5px] leading-[24px] w-[95px] whitespace-nowrap">21:35<br />19/06/2025</div>
        </div>
    </div>
);

const App: React.FC = () => (
    <div className={`w-[1920px] h-[1080px] flex flex-col overflow-hidden bg-[#f4f4f4] ${ui}`}>
        <div className="h-[34px] bg-[#f3f2f3] flex items-center shrink-0">
            <div className="ml-[5px] w-[19px] h-[19px] bg-white border border-[#ddd] flex items-center justify-center">
                <TableauMark size={16} a="#2f7fb5" b="#5fa0cc" c="#2f7fb5" d="#2f7fb5" />
            </div>
            <span className="ml-[11px] pt-[2px] text-[17.8px] text-[#222]">Tableau Public - HR Dashboard</span>
            <div className="ml-auto flex items-center">
                <div className="w-[68px] flex justify-center"><svg width="16" height="2" viewBox="0 0 16 2"><path d="M0 1h16" stroke="#222" /></svg></div>
                <div className="w-[68px] flex justify-center">
                    <svg width="15" height="15" viewBox="0 0 15 15" fill="none" stroke="#222"><rect x=".5" y="3" width="11" height="11.5" rx="1.5" /><path d="M3.500 3V2A1.500 1.500 0 0 1 5 .5h7.500a2 2 0 0 1 2 2V10A1.500 1.500 0 0 1 13 11.500h-1.500" /></svg>
                </div>
                <div className="w-[74px] flex justify-center">
                    <svg width="16" height="16" viewBox="0 0 16 16" fill="none" stroke="#222" strokeWidth="1.2"><path d="m1 1 14 14M15 1 1 15" /></svg>
                </div>
            </div>
        </div>
        <div className="h-[31px] pt-[3px] bg-white flex items-center gap-[16px] pl-[8px] text-[17.6px] text-[#111] shrink-0">
            {['File', 'Data', 'Worksheet', 'Dashboard', 'Story', 'Analysis', 'Map', 'Format', 'Server', 'Window', 'Help'].map((m) => <span key={m}>{m}</span>)}
        </div>
        <div className="h-[60px] bg-[#cce7ff] flex items-center pl-[32px] pr-[60px] text-[20.7px] text-[#1b719e] shrink-0">
            <svg width="13" height="13" viewBox="0 0 13 13" fill="none" stroke="#1b719e" strokeWidth="1.3"><path d="M1 4h3l6-3v10L4 8H1zM3 8l1 4h2L5 8.500M11.500 4.500v3" /></svg>
            <span className="ml-[18px]">Tableau Desktop Public Edition</span>
            <span className="ml-auto">Buy Tableau</span>
        </div>
        <Toolbar />
        <div className="h-[747px] flex shrink-0">
            <DataPanel />
            <div className="w-[232px] ml-[8px] pt-px flex flex-col shrink-0">
                <Card title="Pages" c="h-[86px] pt-[7px]" />
                <Card title="Filters" c="h-[112px] mt-[9px] pt-[9px]" />
                <MarksCard />
            </div>
            <div className="w-[1350px] ml-[8px] pt-px flex flex-col shrink-0">
                <Shelf
                    label="Columns"
                    icon={<svg width="11" height="12" viewBox="0 0 11 12" fill="#666"><path d="M0 0h2v2H0zM4.500 0h2v2h-2zM9 0h2v2H9zM0 4h2v8H0zM4.500 4h2v8h-2zM9 4h2v8H9z" /></svg>}
                >
                    <Pill c="w-[222px] rounded-l-full bg-[#00b27f]">AVG(Salary)</Pill>
                    <Pill c="w-[222px] rounded-r-full bg-[#00b27f]">AVG(Salary)</Pill>
                </Shelf>
                <Shelf
                    c="mt-[8px]"
                    label="Rows"
                    icon={<svg width="12" height="11" viewBox="0 0 12 11" fill="#666"><path d="M0 0h2v2H0zM3.500 0H12v2H3.500zM0 4.500h2v2H0zM3.500 4.500H12v2H3.500zM0 9h2v2H0zM3.500 9H12v2H3.500z" /></svg>}
                >
                    <Pill c="w-[222px] rounded-full bg-[#4b94b0] justify-between pr-[15px]">
                        <span>Education Level</span>
                        <svg width="12" height="12" viewBox="0 0 12 12" fill="none" stroke="#fff"><rect x=".5" y=".5" width="4" height="2.5" /><rect x=".5" y="4.500" width="7" height="2.5" /><rect x=".5" y="8.500" width="11" height="2.5" /></svg>
                    </Pill>
                </Shelf>
                <Chart />
            </div>
        </div>
        <TabBar />
        <StatusBar />
        <Taskbar />
    </div>
);

export default App;
